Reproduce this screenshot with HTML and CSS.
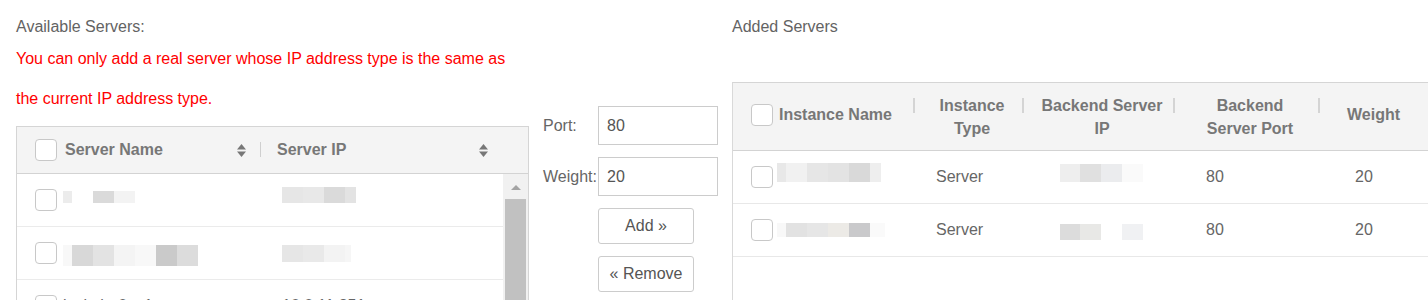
FILE: index.html
```html
<!DOCTYPE html>
<html lang="en">
<head>
<meta charset="utf-8">
<title>Servers</title>
<link rel="stylesheet" href="styles.css">
</head>
<body>
<div class="page">
  <section class="available">
    <div class="title">Available Servers:</div>
    <p class="notice">You can only add a real server whose IP address type is the same as<br>the current IP address type.</p>
    <div class="ltable">
      <div class="lhead">
        <div class="lh-cell lh-name">
          <span class="cb"></span>
          <span>Server Name</span>
          <svg class="sort" viewBox="0 0 9 13"><polygon points="0,5.5 4.5,0 9,5.5"/><polygon points="0,7.5 9,7.5 4.5,13"/></svg>
        </div>
        <div class="lh-cell lh-ip sep">
          <span>Server IP</span>
          <svg class="sort" viewBox="0 0 9 13"><polygon points="0,5.5 4.5,0 9,5.5"/><polygon points="0,7.5 9,7.5 4.5,13"/></svg>
        </div>
        <div></div>
      </div>
      <div class="lbody">
        <div class="lrows">
          <div class="lrow">
            <div class="lcell lc-name"><span class="cb"></span><span class="redact rl1n"></span></div>
            <div class="lcell lc-ip"><span class="redact rl1i"></span></div>
          </div>
          <div class="lrow">
            <div class="lcell lc-name"><span class="cb"></span><span class="redact rl2n"></span></div>
            <div class="lcell lc-ip"><span class="redact rl2i"></span></div>
          </div>
          <div class="lrow">
            <div class="lcell lc-name"><span class="cb"></span><span class="ltext">lzabxin-0cn1</span></div>
            <div class="lcell lc-ip"><span class="ltext">10.0.11.251</span></div>
          </div>
        </div>
        <div class="vscroll">
          <span class="vs-up"></span>
          <span class="vs-thumb"></span>
        </div>
      </div>
    </div>
  </section>

  <section class="form">
    <div class="field"><label for="port">Port:</label><input id="port" type="text" value="80"></div>
    <div class="field"><label for="weight">Weight:</label><input id="weight" type="text" value="20"></div>
    <button class="btn" type="button">Add »</button>
    <button class="btn" type="button">« Remove</button>
  </section>

  <section class="added">
    <div class="title">Added Servers</div>
    <div class="rtable">
      <div class="rhead">
        <div class="rh rh-name"><span class="cb"></span><span>Instance Name</span></div>
        <div class="rh sep2">Instance<br>Type</div>
        <div class="rh sep2">Backend Server<br>IP</div>
        <div class="rh sep2">Backend<br>Server Port</div>
        <div class="rh sep2 rh-single">Weight</div>
        <div></div>
      </div>
      <div class="rrow">
        <div class="rcell rc-name"><span class="cb"></span><span class="redact rr1n"></span></div>
        <div class="rcell rc-type">Server</div>
        <div class="rcell rc-ip"><span class="redact rr1i"></span></div>
        <div class="rcell rc-port">80</div>
        <div class="rcell rc-weight">20</div>
        <div></div>
      </div>
      <div class="rrow">
        <div class="rcell rc-name"><span class="cb"></span><span class="redact rr2n"></span></div>
        <div class="rcell rc-type">Server</div>
        <div class="rcell rc-ip"><span class="redact rr2i"></span></div>
        <div class="rcell rc-port">80</div>
        <div class="rcell rc-weight">20</div>
        <div></div>
      </div>
    </div>
  </section>
</div>
</body>
</html>
```

FILE: styles.css
```css
html, body {
  margin: 0;
  overflow: hidden;
  background: #fff;
}

body {
  font-family: "Liberation Sans", Arial, sans-serif;
  font-size: 16px;
  color: #666;
}

.page {
  display: flex;
  align-items: flex-start;
  gap: 14px;
  padding: 17px 0 0 16px;
}

.title {
  line-height: 20px;
  color: #636363;
}

/* ---------- left: available servers ---------- */
.available {
  width: 513px;
  flex: none;
}

.notice {
  margin: 2px 0 0;
  line-height: 40px;
  color: #ff0000;
}

.ltable {
  margin-top: 7px;
  border: 1px solid #d5d5d5;
}

.lhead {
  display: grid;
  grid-template-columns: 243px 243px 25px;
  height: 46px;
  background: #f4f4f4;
  border-bottom: 1px solid #d3d3d3;
}

.lh-cell {
  display: flex;
  align-items: center;
  font-weight: bold;
  color: #777;
}

.lh-name {
  gap: 8px;
  padding: 0 14px 0 18px;
}

.lh-ip {
  padding: 0 15px 0 17px;
}

.sep {
  background: linear-gradient(#cfcfcf, #cfcfcf) no-repeat 0 15px / 1px 15px;
}

.sort {
  margin-left: auto;
  width: 9px;
  height: 13px;
  fill: #777;
  flex: none;
}

.cb {
  display: block;
  width: 22px;
  height: 22px;
  box-sizing: border-box;
  border: 1px solid #c8c8c8;
  border-radius: 4px;
  background: #fff;
  flex: none;
}

.lbody {
  display: flex;
  height: 140px;
}

.lrows {
  flex: 1;
}

.lrow {
  display: grid;
  grid-template-columns: 243px 243px;
  height: 52px;
  border-bottom: 1px solid #ebebeb;
}

.lcell {
  display: flex;
  align-items: center;
}

.lc-name {
  gap: 6px;
  padding-left: 18px;
}

.lc-ip {
  padding-left: 22px;
}

.ltext {
  color: #666;
}

.vscroll {
  width: 25px;
  flex: none;
  display: flex;
  flex-direction: column;
  background: #f1f1f1;
}

.vs-up {
  width: 0;
  height: 0;
  margin: 11px auto 0;
  border-left: 5.5px solid transparent;
  border-right: 5.5px solid transparent;
  border-bottom: 5px solid #a3a3a3;
}

.vs-thumb {
  flex: 1;
  margin: 9px 2px 0;
  background: #c1c1c1;
}

/* ---------- redacted (blurred) values ---------- */
.redact {
  display: block;
  flex: none;
  align-self: flex-start;
}

.rl1n {
  width: 72px;
  height: 12px;
  margin-top: 17px;
  background: linear-gradient(90deg, #ececec 0 9px, transparent 9px 30px, #dadada 30px 51px, #f3f3f3 51px 72px);
}

.rl1i {
  width: 74px;
  height: 16px;
  margin-top: 13px;
  background: linear-gradient(90deg, #e6e6e6 0 21px, #e8e8e8 21px 42px, #dadada 42px 63px, #e3e3e3 63px 74px);
}

.rl2n {
  width: 135px;
  height: 21px;
  margin-top: 18px;
  background: linear-gradient(90deg, #f8f8f8 0 9px, #d8d8d8 9px 30px, #e3e3e3 30px 51px, #f4f4f4 51px 72px, #f8f8f8 72px 93px, #cacaca 93px 114px, #dcdcdc 114px 135px);
}

.rl2i {
  width: 69px;
  height: 17px;
  margin-top: 18px;
  background: linear-gradient(90deg, #e6e6e6 0 21px, #e9e9e9 21px 42px, #f3f3f3 42px 63px, #f6f6f6 63px 69px);
}

.rr1n {
  width: 104px;
  height: 19px;
  margin-top: 12px;
  background: linear-gradient(90deg, #e8e8e8 0 9px, #f1f1f1 9px 30px, #e6e6e6 30px 51px, #e3e3e3 51px 72px, #d9d9d9 72px 93px, #eeeeee 93px 104px);
}

.rr1i {
  width: 83px;
  height: 18px;
  margin-top: 13px;
  background: linear-gradient(90deg, #eeeeee 0 20px, #e0e0e0 20px 41px, #ebecee 41px 62px, #fafafa 62px 83px);
}

.rr2n {
  width: 108px;
  height: 14px;
  margin-top: 19px;
  background: linear-gradient(90deg, #f8f8f8 0 9px, #e2e2e2 9px 30px, #e6e6e6 30px 51px, #eceae6 51px 72px, #c9c9cb 72px 93px, #fafafa 93px 108px);
}

.rr2i {
  width: 83px;
  height: 16px;
  margin-top: 20px;
  background: linear-gradient(90deg, #dcdcdc 0 20px, #e8e8e6 20px 41px, transparent 41px 62px, #f0f1f3 62px 83px);
}

/* ---------- middle: form ---------- */
.form {
  width: 175px;
  flex: none;
  margin-top: 89px;
  display: flex;
  flex-direction: column;
  gap: 12px;
}

.field {
  display: flex;
  align-items: center;
}

.field label {
  width: 55px;
  flex: none;
  color: #666;
}

.field input {
  width: 120px;
  height: 39px;
  box-sizing: border-box;
  margin: 0;
  padding: 0 8px;
  border: 1px solid #cccccc;
  border-radius: 0;
  font: inherit;
  color: #555;
  outline: none;
}

.btn {
  margin: 0 0 0 55px;
  width: 96px;
  height: 36px;
  padding: 0;
  border: 1px solid #cccccc;
  border-radius: 3px;
  background: #fff;
  font: inherit;
  color: #555;
}

/* ---------- right: added servers ---------- */
.added {
  flex: 1;
  min-width: 0;
}

.rtable {
  margin-top: 45px;
  width: calc(100% + 40px);
  height: 260px;
  border-top: 1px solid #d5d5d5;
  border-left: 1px solid #d9d9d9;
}

.rhead,
.rrow {
  display: grid;
  grid-template-columns: 180px 109px 151px 145px 102px 1fr;
}

.rhead {
  height: 67px;
  background: #f4f4f4;
  border-bottom: 1px solid #d3d3d3;
  font-weight: bold;
  color: #777;
  line-height: 23px;
}

.rh {
  display: flex;
  align-items: center;
  justify-content: center;
  text-align: center;
  white-space: nowrap;
  padding-left: 9px;
}

.sep2 {
  background: linear-gradient(#d4d4d4, #d4d4d4) no-repeat 0 15px / 2px 15px;
}

.rh-name {
  justify-content: flex-start;
  gap: 6px;
  padding: 0 0 4px 18px;
}

.rh-single {
  padding-bottom: 4px;
}

.rrow {
  height: 52px;
  border-bottom: 1px solid #e8e8e8;
}

.rcell {
  display: flex;
  align-items: center;
  color: #666;
}

.rc-name {
  gap: 4px;
  padding-left: 18px;
}

.rc-type {
  padding-left: 23px;
}

.rc-ip {
  padding-left: 38px;
}

.rc-port {
  padding-left: 33px;
}

.rc-weight {
  padding-left: 37px;
}
```
